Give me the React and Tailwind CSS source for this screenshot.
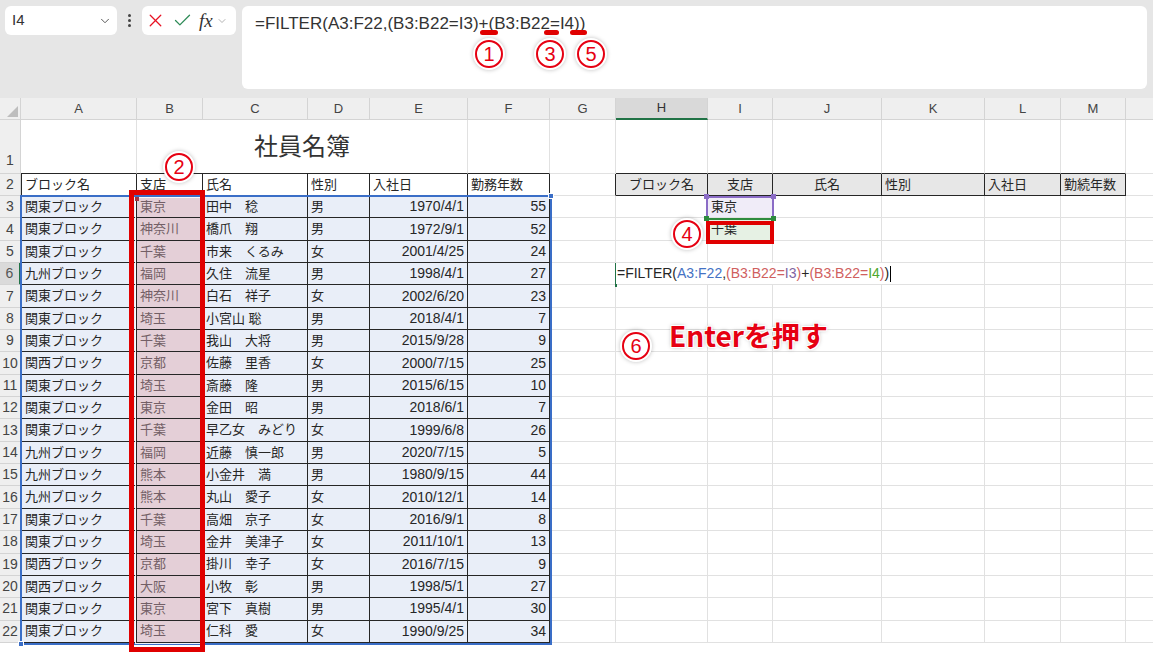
import React from "react";
import { ChevronDown, X, Check } from "lucide-react";

const COLS = ["A", "B", "C", "D", "E", "F", "G", "H", "I", "J", "K", "L", "M"];

const rows = [
  ["関東ブロック", "東京", "田中　稔", "男", "1970/4/1", "55"],
  ["関東ブロック", "神奈川", "橋爪　翔", "男", "1972/9/1", "52"],
  ["関東ブロック", "千葉", "市来　くるみ", "女", "2001/4/25", "24"],
  ["九州ブロック", "福岡", "久住　流星", "男", "1998/4/1", "27"],
  ["関東ブロック", "神奈川", "白石　祥子", "女", "2002/6/20", "23"],
  ["関東ブロック", "埼玉", "小宮山 聡", "男", "2018/4/1", "7"],
  ["関東ブロック", "千葉", "我山　大将", "男", "2015/9/28", "9"],
  ["関西ブロック", "京都", "佐藤　里香", "女", "2000/7/15", "25"],
  ["関東ブロック", "埼玉", "斎藤　隆", "男", "2015/6/15", "10"],
  ["関東ブロック", "東京", "金田　昭", "男", "2018/6/1", "7"],
  ["関東ブロック", "千葉", "早乙女　みどり", "女", "1999/6/8", "26"],
  ["九州ブロック", "福岡", "近藤　慎一郎", "男", "2020/7/15", "5"],
  ["九州ブロック", "熊本", "小金井　満", "男", "1980/9/15", "44"],
  ["九州ブロック", "熊本", "丸山　愛子", "女", "2010/12/1", "14"],
  ["関東ブロック", "千葉", "高畑　京子", "女", "2016/9/1", "8"],
  ["関東ブロック", "埼玉", "金井　美津子", "女", "2011/10/1", "13"],
  ["関西ブロック", "京都", "掛川　幸子", "女", "2016/7/15", "9"],
  ["関西ブロック", "大阪", "小牧　彰", "男", "1998/5/1", "27"],
  ["関東ブロック", "東京", "宮下　真樹", "男", "1995/4/1", "30"],
  ["関東ブロック", "埼玉", "仁科　愛", "女", "1990/9/25", "34"],
];

const tableHead = ["ブロック名", "支店", "氏名", "性別", "入社日", "勤務年数"];
const rightHead = ["ブロック名", "支店", "氏名", "性別", "入社日", "勤続年数"];

// circled number annotation
const Badge = ({ n, className }) => (
  <div
    className={
      "absolute w-[28px] h-[28px] rounded-full border-2 border-[#e60012] bg-white flex items-center justify-center text-[#e60012] text-[20px] leading-none shadow-[0_0_0_2px_#fff,0_0_4px_2px_rgba(0,0,0,0.25)] " +
      className
    }
  >
    {n}
  </div>
);

const RowHeader = ({ r }) => (
  <div
    className={
      "flex justify-center border-b border-[#d4d4d4] text-[14px] " +
      (r === 1 ? "items-end pb-[2px] " : "items-center ") +
      (r === 6
        ? "bg-[#dadada] border-r-2 border-r-[#217346] text-[#555]"
        : "bg-[#efefef] border-r text-[#444]")
    }
  >
    {r}
  </div>
);

function dataCell(r, c, text) {
  // c: 1..13 (A..M)
  const inTable = r >= 2 && c >= 1 && c <= 6;
  const rightHeadRow = r === 2 && c >= 8 && c <= 13;
  const rightBlack = inTable || (r === 2 && c === 7) || rightHeadRow;
  const bottomBlack =
    inTable || (r === 1 && c >= 8 && c <= 13) || rightHeadRow;

  let bg = "";
  if (r >= 3 && inTable) bg = c === 2 ? "bg-[#e4cfd7]" : "bg-[#e9eef8]";
  if (rightHeadRow) bg = "bg-[#e7e7e7]";
  if (r === 3 && c === 9) bg = "bg-[#f0ecf8]";
  if (r === 4 && c === 9) bg = "bg-[#e6f1e4]";

  let align = "justify-start pl-[3px]";
  if (r >= 3 && (c === 5 || c === 6)) align = "justify-end pr-[3px]";
  if (rightHeadRow && c <= 10) align = "justify-center";

  const color = r >= 3 && c === 2 ? "text-[#735f66]" : "text-[#262626]";

  return (
    <div
      key={c}
      className={
        "flex items-center min-w-0 overflow-hidden whitespace-nowrap border-r border-b text-[13px] " +
        (/^[0-9/]+$/.test(text || "") ? "text-[14px] " : "") +
        (rightBlack ? "border-r-[#262626] " : "border-r-[#e1e1e1] ") +
        (bottomBlack ? "border-b-[#262626] " : "border-b-[#e1e1e1] ") +
        (inTable && c === 1 ? "border-l border-l-[#262626] " : "") +
        bg +
        " " +
        align +
        " " +
        color
      }
    >
      {text}
    </div>
  );
}

const Formula = () => (
  <span className="relative z-10 inline-flex items-center h-full bg-white pl-[1px] pr-[2px] text-[14px] text-[#262626]">
    =FILTER(<span className="text-[#4472c4]">A3:F22</span>,
    <span className="text-[#d0605e]">(B3:B22=</span>
    <span className="text-[#8064a2]">I3</span>
    <span className="text-[#d0605e]">)</span>+
    <span className="text-[#d0605e]">(B3:B22=</span>
    <span className="text-[#4ea72e]">I4</span>
    <span className="text-[#d0605e]">)</span>)
    <span className="ml-[1px] w-[1px] h-[16px] bg-black" />
  </span>
);

export default function App() {
  return (
    <div className="relative w-[1153px] h-[656px] overflow-hidden bg-white font-['Liberation_Sans','Noto_Sans_CJK_JP',sans-serif]">
      {/* formula bar */}
      <div className="h-[98px] bg-[#e6e6e6] flex items-start pt-[6px] pl-[5px]">
        <div className="w-[112px] h-[29px] rounded-md bg-white flex items-center justify-between pl-[7px] pr-[5px]">
          <span className="text-[15px] text-[#333]">I4</span>
          <ChevronDown size={14} strokeWidth={1.5} className="text-[#444]" />
        </div>
        <div className="w-[25px] h-[29px] flex flex-col items-center justify-center gap-[2px]">
          <span className="w-[3px] h-[3px] rounded-full bg-[#444]" />
          <span className="w-[3px] h-[3px] rounded-full bg-[#444]" />
          <span className="w-[3px] h-[3px] rounded-full bg-[#444]" />
        </div>
        <div className="w-[94px] h-[29px] rounded-md bg-white flex items-center pl-[3px] gap-[6px]">
          <X size={21} strokeWidth={1.5} className="text-[#e81123]" />
          <Check size={21} strokeWidth={1.5} className="text-[#2e8b57]" />
          <span className="font-['Liberation_Serif',serif] italic text-[19px] text-[#333] leading-none">fx</span>
          <ChevronDown size={12} strokeWidth={1.5} className="text-[#999] -ml-[3px]" />
        </div>
        <div className="ml-[6px] mr-[6px] flex-1 h-[83px] rounded-md bg-white pl-[13px] pt-[5px] text-[17px] text-[#333]">
          =FILTER(A3:F22,(B3:B22=I3)+(B3:B22=I4))
        </div>
      </div>

      {/* sheet */}
      <div className="grid grid-cols-[21px_116px_66px_105px_62px_98px_82px_66px_92px_65px_109px_103px_76px_65px_27px] grid-rows-[22px_54px_22px_repeat(20,22.35px)]">
        {/* column header row */}
        <div className="relative bg-[#efefef] border-r border-b border-[#d4d4d4]">
          <div className="absolute right-[2px] bottom-[2px] w-0 h-0 border-l-[11px] border-l-transparent border-b-[11px] border-b-[#bdbdbd]" />
        </div>
        {COLS.map((col) => (
          <div
            key={col}
            className={
              "flex items-center justify-center text-[13px] border-r border-[#d4d4d4] " +
              (col === "H"
                ? "bg-[#d9d9d9] border-b-2 border-b-[#217346] text-[#333]"
                : "bg-[#efefef] border-b text-[#444]")
            }
          >
            {col}
          </div>
        ))}
        <div className="bg-[#efefef] border-b border-[#d4d4d4]" />

        {/* row 1 */}
        <RowHeader r={1} />
        <div className="border-r border-r-[#e1e1e1] border-b border-b-[#262626]" />
        <div className="col-span-4 flex items-center justify-center border-r border-r-[#e1e1e1] border-b border-b-[#262626] text-[24px] text-[#333]">
          社員名簿
        </div>
        <div className="border-r border-r-[#e1e1e1] border-b border-b-[#262626]" />
        {[7, 8, 9, 10, 11, 12, 13].map((c) => dataCell(1, c, ""))}
        <div className="border-b border-[#e1e1e1]" />

        {/* row 2 */}
        <RowHeader r={2} />
        {tableHead.map((t, i) => dataCell(2, i + 1, t))}
        {dataCell(2, 7, "")}
        {rightHead.map((t, i) => dataCell(2, i + 8, t))}
        <div className="border-b border-[#e1e1e1]" />

        {/* data rows */}
        {rows.map((row, i) => {
          const r = i + 3;
          return (
            <React.Fragment key={r}>
              <RowHeader r={r} />
              {row.map((t, j) => dataCell(r, j + 1, t))}
              {dataCell(r, 7, "")}
              {r === 6 ? (
                <div className="flex items-stretch whitespace-nowrap border-r border-b border-[#e1e1e1] overflow-visible">
                  <Formula />
                </div>
              ) : (
                dataCell(r, 8, "")
              )}
              {dataCell(r, 9, r === 3 ? "東京" : r === 4 ? "千葉" : "")}
              {[10, 11, 12, 13].map((c) => dataCell(r, c, ""))}
              <div className="border-b border-[#e1e1e1]" />
            </React.Fragment>
          );
        })}
      </div>

      {/* selection A3:F22 */}
      <div className="absolute left-[20px] top-[195px] w-[532px] h-[450px] border-2 border-[#3a6ec7] pointer-events-none" />
      <div className="absolute left-[548px] top-[193px] w-[6px] h-[6px] bg-[#3a6ec7] border border-white" />
      <div className="absolute left-[18px] top-[641px] w-[6px] h-[6px] bg-[#3a6ec7] border border-white" />

      {/* B3:B22 highlight */}
      <div className="absolute left-[135px] top-[197px] w-[66px] h-[447px] border border-white/90" />
      <div className="absolute left-[135px] top-[197px] w-[4px] h-[4px] bg-[#a3343f]" />
      <div className="absolute left-[129px] top-[190px] w-[76px] h-[462px] border-[5px] border-[#e00000]" />

      {/* I3 reference */}
      <div className="absolute left-[706px] top-[196px] w-[68px] h-[24px] border-2 border-[#8b6cc6]" />
      <div className="absolute left-[704px] top-[194px] w-[5px] h-[5px] bg-[#8b6cc6]" />
      <div className="absolute left-[771px] top-[194px] w-[5px] h-[5px] bg-[#8b6cc6]" />

      {/* I4 reference */}
      <div className="absolute left-[706px] top-[218px] w-[68px] h-[2px] bg-[#2e8b3e]" />
      <div className="absolute left-[704px] top-[216px] w-[5px] h-[5px] bg-[#2e8b3e]" />
      <div className="absolute left-[771px] top-[216px] w-[5px] h-[5px] bg-[#2e8b3e]" />
      <div className="absolute left-[706px] top-[221px] w-[68px] h-[23px] border-[4px] border-[#e00000]" />

      {/* active cell H6 */}
      <div className="absolute left-[615px] top-[263px] w-[93px] h-[2px] bg-[#217346]" />
      <div className="absolute left-[615px] top-[263px] w-[2px] h-[24px] bg-[#217346]" />

      {/* red marks in formula bar */}
      <div className="absolute left-[480px] top-[30px] w-[18px] h-[5px] rounded-full bg-[#e00000]" />
      <div className="absolute left-[544px] top-[30px] w-[15px] h-[5px] rounded-full bg-[#e00000]" />
      <div className="absolute left-[570px] top-[30px] w-[17px] h-[5px] rounded-full bg-[#e00000]" />

      <Badge n="1" className="left-[475px] top-[40px]" />
      <Badge n="3" className="left-[536px] top-[40px]" />
      <Badge n="5" className="left-[577px] top-[40px]" />
      <Badge n="2" className="left-[165px] top-[153px]" />
      <Badge n="4" className="left-[673px] top-[220px]" />
      <Badge n="6" className="left-[622px] top-[332px]" />

      <div className="absolute left-[669px] top-[321px] text-[28px] font-bold leading-none text-[#e60012] font-['Noto_Sans_CJK_JP',sans-serif] [text-shadow:1px_1px_0_#fff,-1px_-1px_0_#fff,1px_-1px_0_#fff,-1px_1px_0_#fff,0_0_4px_rgba(0,0,0,0.35)]">
        Enterを押す
      </div>
    </div>
  );
}
